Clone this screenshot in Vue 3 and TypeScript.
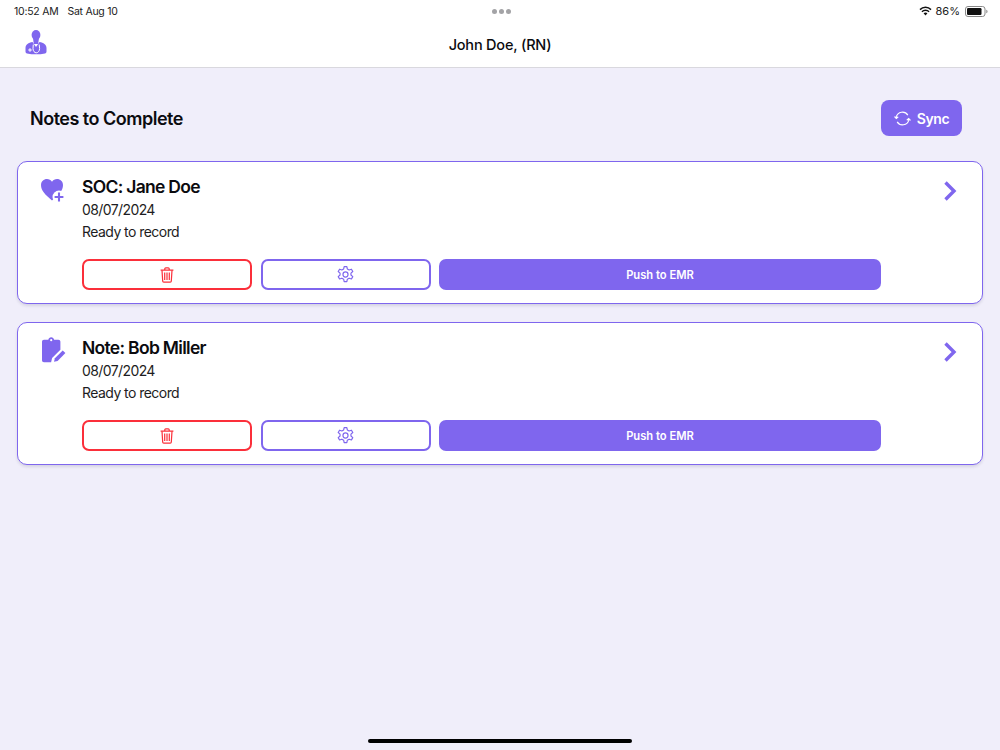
<script setup lang="ts">
interface Note {
  title: string
  date: string
  status: string
  icon: 'heart' | 'clip'
}
const notes: Note[] = [
  { title: 'SOC: Jane Doe', date: '08/07/2024', status: 'Ready to record', icon: 'heart' },
  { title: 'Note: Bob Miller', date: '08/07/2024', status: 'Ready to record', icon: 'clip' },
]
</script>

<template>
  <div class="page">
    <header class="top">
      <div class="status">
        <div class="status-left"><span>10:52 AM</span><span>Sat Aug 10</span></div>
        <div class="dots"><i></i><i></i><i></i></div>
        <div class="status-right">
          <svg class="wifi" viewBox="0 0 16 12" width="13" height="10">
            <path d="M8 11.5 5.6 8.9a3.4 3.4 0 0 1 4.8 0Z" fill="#111" />
            <path d="M3.6 6.900a6.200 6.200 0 0 1 8.800 0" fill="none" stroke="#111" stroke-width="1.800" />
            <path d="M1.200 4.300a9.600 9.600 0 0 1 13.600 0" fill="none" stroke="#111" stroke-width="1.800" />
          </svg>
          <span>86%</span>
          <svg class="battery" viewBox="0 0 23 11" width="23" height="11">
            <rect x="0.5" y="0.5" width="19.500" height="10" rx="2.500" fill="none" stroke="#888" />
            <rect x="2" y="2" width="14.500" height="7" rx="1.200" fill="#111" />
            <path d="M21.300 3.800c.9.300 1.200 1 1.200 1.700s-.3 1.400-1.200 1.700Z" fill="#888" />
          </svg>
        </div>
      </div>
      <div class="nav">
        <svg class="doctor" viewBox="0 0 22 25" width="22" height="25">
          <ellipse cx="11" cy="5" rx="4.400" ry="5" fill="#7f66ee" />
          <path d="M8 8h6l-.8 6h-4.400Z" fill="#7f66ee" />
          <path d="M7.500 12C3.500 12.800.5 14.500.5 18v3.500c0 1 .6 1.700 1.500 1.900 5.800 1.200 12.200 1.200 18 0 .9-.2 1.500-.9 1.500-1.900V18c0-3.500-3-5.200-7-6l-3.500 5Z" fill="#7f66ee" />
          <path d="M3.200 20h3.600M5 18.200v3.600" stroke="#fff" stroke-width="1.100" />
          <path d="M8.300 14.500 8 18.500c0 2.600 1.600 4.300 3.300 4.300s3.300-1.700 3.300-4.300l-.4-4" fill="none" stroke="#fff" stroke-width="1" />
        </svg>
        <h1>John Doe, (RN)</h1>
      </div>
    </header>

    <main class="content">
      <div class="heading">
        <h2>Notes to Complete</h2>
        <button class="sync" type="button">
          <svg viewBox="0 0 20 20" width="17" height="17" fill="none" stroke="#fff" stroke-width="1.300">
            <path d="M2.600 8.200A7.600 7.600 0 0 1 16.300 6" />
            <path d="M17.400 11.800A7.600 7.600 0 0 1 3.700 14" />
            <path d="M0.600 7.800 2.700 10 5 8" fill="#fff" />
            <path d="M19.400 12.200 17.300 10 15 12" fill="#fff" />
          </svg>
          Sync
        </button>
      </div>

      <article v-for="note in notes" :key="note.title" class="card">
        <div class="kind">
          <svg v-if="note.icon === 'heart'" viewBox="0 0 26 26" width="26" height="26">
            <path d="M11 24.500C4 18.500 0 14.500 0 9 0 5.500 2.700 3 6 3c2 0 3.800 1 5 2.800C12.200 4 14 3 16 3c3.300 0 6 2.500 6 6 0 5.500-4 9.500-11 15.500Z" fill="#7f66ee" />
            <circle cx="18" cy="21" r="6.500" fill="#fff" />
            <path d="M18 16.600v8.800M13.600 21h8.800" stroke="#7f66ee" stroke-width="2.100" />
          </svg>
          <svg v-else viewBox="0 0 26 26" width="26" height="26">
            <path d="M3 2.800h4.300C7.600 1.300 8.700.3 10.200.3s2.600 1 2.900 2.500h4.300c1.200 0 2 .8 2 2v8l-8.300 8.300-1 4.100H3c-1.200 0-2-.8-2-2V4.800c0-1.200.8-2 2-2Z" fill="#7f66ee" />
            <circle cx="10.200" cy="3.200" r="1.100" fill="#fff" />
            <path d="M13 24.800l.9-3.600 7.800-7.800 2.700 2.700-7.800 7.800Z" fill="#7f66ee" />
          </svg>
        </div>
        <div class="body">
          <h3>{{ note.title }}</h3>
          <p class="date">{{ note.date }}</p>
          <p class="state">{{ note.status }}</p>
          <div class="actions">
            <button class="btn del" type="button" aria-label="Delete">
              <svg viewBox="0 0 14 16" width="14" height="16" fill="none" stroke="#fb2f3a" stroke-width="1.200">
                <path d="M.6 3.200h12.800M4.800 3V1.800c0-.6.400-1 1-1h2.400c.6 0 1 .4 1 1V3" />
                <path d="M2 3.300l.7 10.800c0 .7.500 1.100 1.100 1.100h6.400c.6 0 1.100-.4 1.100-1.100L12 3.300" />
                <path d="M4.700 5.500v7.500M7 5.500v7.500M9.300 5.500v7.500" />
              </svg>
            </button>
            <button class="btn cfg" type="button" aria-label="Settings">
              <svg viewBox="0 0 24 24" width="19" height="19" fill="none" stroke="#7f66ee" stroke-width="1.500" stroke-linejoin="round">
                <path d="M10.300 2h3.400l.6 3 2.300 1.300 2.900-1 1.700 3-2.300 2v2.400l2.300 2-1.700 3-2.900-1-2.300 1.300-.6 3h-3.400l-.6-3-2.300-1.300-2.900 1-1.700-3 2.300-2v-2.400l-2.300-2 1.700-3 2.900 1L9.700 5Z" />
                <circle cx="12" cy="12" r="3.200" />
              </svg>
            </button>
            <button class="btn push" type="button">Push to EMR</button>
          </div>
        </div>
        <svg class="chev" viewBox="0 0 14 20" width="14" height="20" fill="none" stroke="#7f66ee" stroke-width="3.400">
          <path d="M2.500 1.500 11 10l-8.500 8.500" />
        </svg>
      </article>
    </main>

    <div class="home"></div>
  </div>
</template>

<style>
html, body { margin: 0; }
</style>

<style scoped>
.page {
  position: relative;
  width: 1000px;
  height: 750px;
  overflow: hidden;
  background: #f0eefa;
  font-family: Inter, "Liberation Sans", sans-serif;
  color: #0b0b0f;
}
.top {
  height: 67px;
  background: #fff;
  border-bottom: 1px solid #d9d8de;
}
.status {
  height: 22px;
  padding: 0 12px 0 14px;
  display: grid;
  grid-template-columns: 1fr auto 1fr;
  align-items: center;
  font-size: 10.5px;
  color: #222;
}
.status-left { display: flex; gap: 9px; letter-spacing: -0.25px; }
.dots { display: flex; gap: 2px; }
.dots i { width: 5px; height: 5px; border-radius: 50%; background: #a3a3a6; }
.status-right { display: flex; justify-content: flex-end; align-items: center; gap: 4px; font-size: 11px; }
.battery { margin-left: 1px; }
.nav {
  position: relative;
  height: 45px;
  display: flex;
  align-items: center;
  justify-content: center;
}
.doctor { position: absolute; left: 25px; top: 8px; }
h1 { margin: 0; font-size: 14.5px; font-weight: 500; letter-spacing: -0.2px; }
.content { padding: 32px 17px 0; }
.heading {
  display: flex;
  justify-content: space-between;
  align-items: center;
  padding: 0 21px 0 13px;
  margin-bottom: 25px;
}
h2 { margin: 0; font-size: 18px; font-weight: 600; letter-spacing: -0.5px; }
.sync {
  width: 81px;
  height: 36px;
  display: flex;
  align-items: center;
  justify-content: center;
  gap: 6px;
  border: 0;
  border-radius: 8px;
  background: #7f66ee;
  color: #fff;
  font: 600 14px Inter, "Liberation Sans", sans-serif;
  letter-spacing: -0.4px;
}
.card {
  position: relative;
  box-sizing: border-box;
  height: 143px;
  margin-bottom: 18px;
  padding: 14px 0 0 23px;
  display: flex;
  background: #fff;
  border: 1px solid #7f66ee;
  border-radius: 10px;
  box-shadow: 0 2px 3px rgba(60, 60, 90, 0.14);
}
.kind { width: 41px; flex: none; }
.body { flex: none; width: 799px; }
h3 { margin: 0; font-size: 17.5px; line-height: 22px; font-weight: 600; letter-spacing: -0.7px; }
.date, .state { margin: 0; font-size: 14px; line-height: 22px; color: #1d1d22; letter-spacing: -0.55px; }
.date { margin-top: 1px; letter-spacing: -0.6px; }
.actions { display: flex; gap: 9px; margin-top: 16px; }
.btn {
  box-sizing: border-box;
  height: 31px;
  display: flex;
  align-items: center;
  justify-content: center;
  border-radius: 7px;
  background: #fff;
  padding: 0;
}
.del { width: 170px; border: 2px solid #fb2f3a; }
.cfg { width: 170px; border: 2px solid #7f66ee; padding-right: 2px; }
.push {
  width: 442px;
  margin-left: -1px;
  border: 0;
  background: #7f66ee;
  color: #fff;
  font: 600 11.2px Inter, "Liberation Sans", sans-serif;
}
.chev { position: absolute; right: 25px; top: 19px; }
.home {
  position: absolute;
  left: 368px;
  bottom: 7px;
  width: 264px;
  height: 4px;
  border-radius: 2px;
  background: #000;
}
</style>
